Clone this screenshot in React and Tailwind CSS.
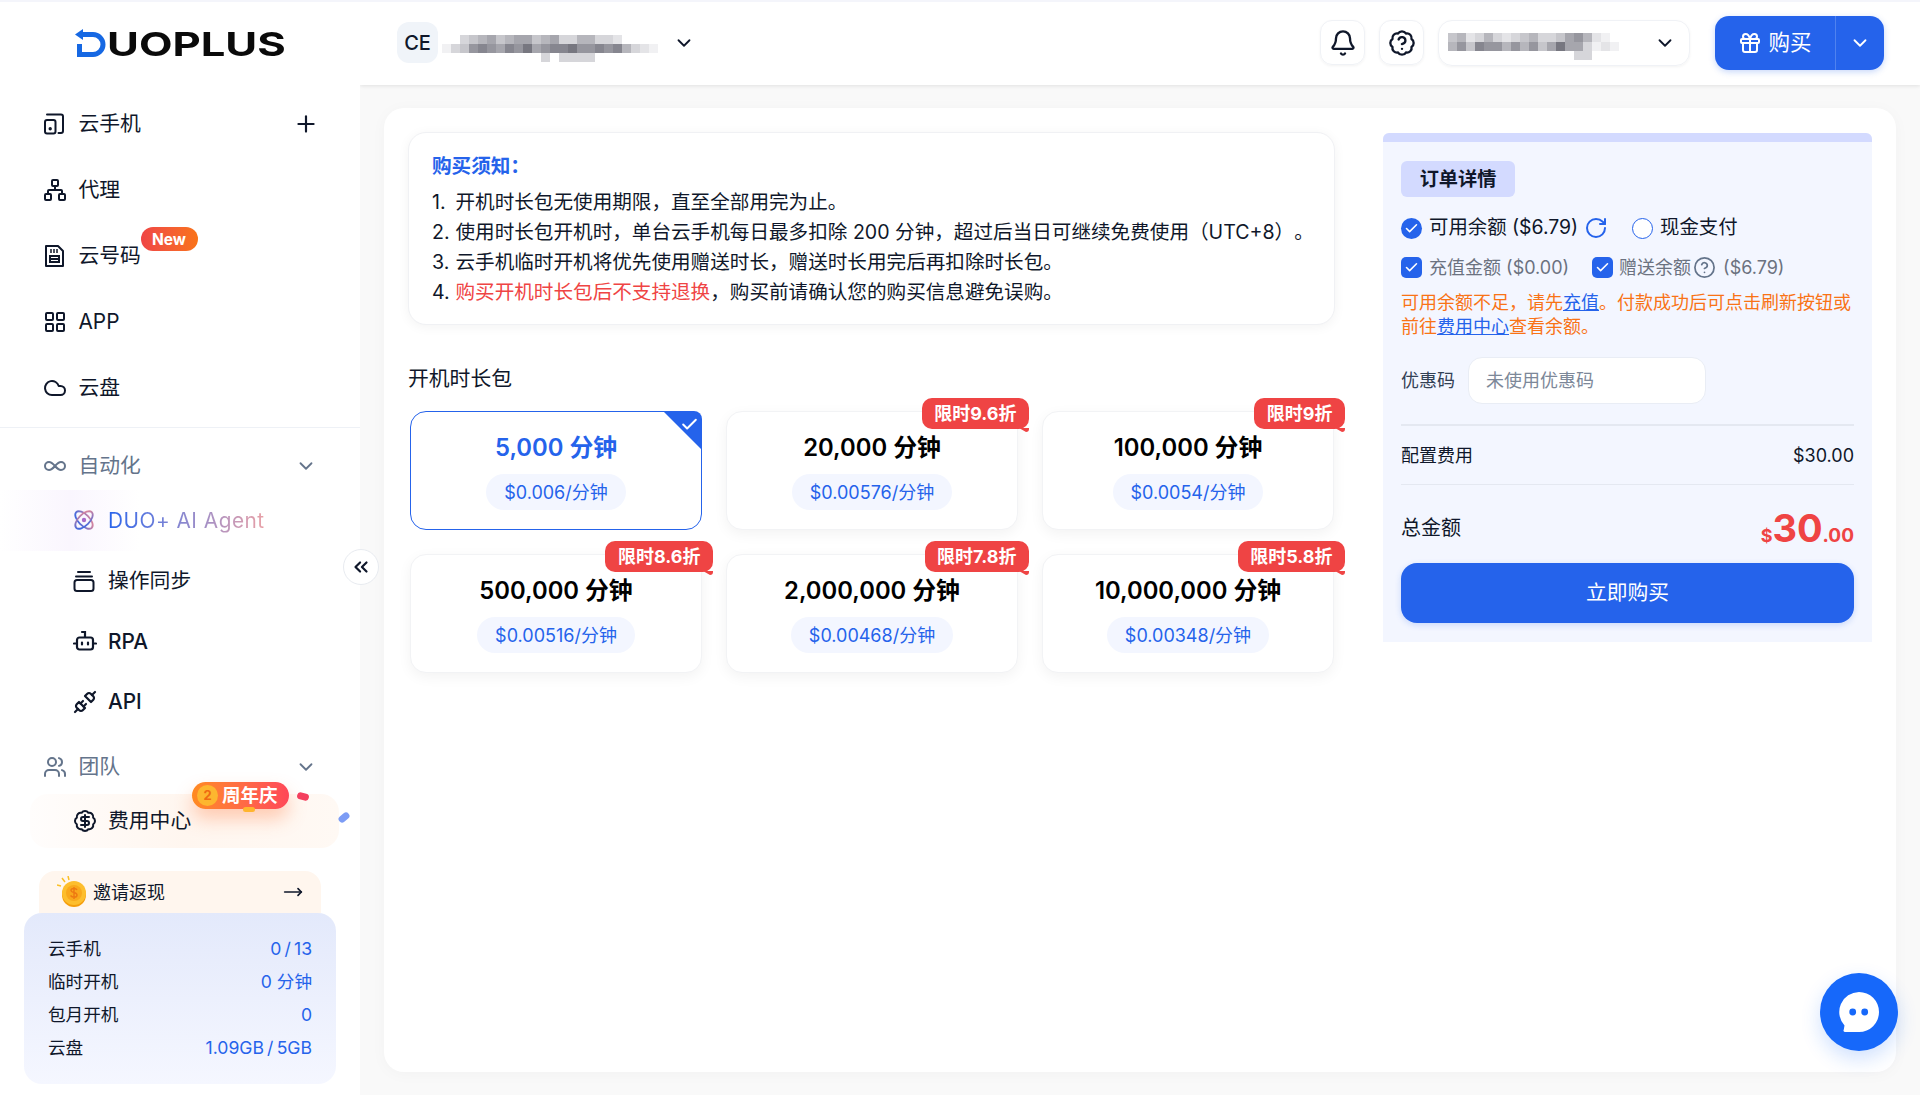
import {
  Plus,
  Network,
  LayoutGrid,
  Cloud,
  Infinity as InfinityIcon,
  ChevronDown,
  ChevronsLeft,
  Users,
  BadgeDollarSign,
  MoveRight,
  Bell,
  BadgeHelp,
  Gift,
  Check,
  RotateCw,
  CircleHelp,
  Unplug,
} from "lucide-react";

const grays = ["none", "#f1f1f3", "#e4e4e7", "#d6d6da", "#c6c6cb", "#b6b6bc", "#a6a6ad", "#96969e", "#86868f", "#777780"];

// mosaic that hides the account names
function Mosaic({ rows, className }) {
  const w = Math.max(...rows.map((r) => r.length)) * 9;
  return (
    <svg width={w} height={rows.length * 9} className={className}>
      {rows.map((row, y) =>
        row.split("").map((c, x) => <rect key={x + "-" + y} x={x * 9} y={y * 9} width="9" height="9" fill={grays[+c]} />)
      )}
    </svg>
  );
}

function PhoneIcon() {
  return (
    <svg width="22" height="22" viewBox="0 0 22 22" fill="none" stroke="#0f172a" strokeWidth="2" strokeLinecap="round">
      <path d="M4 1.500H18a2 2 0 0 1 2 2V18a2 2 0 0 1-2 2h-2.500" />
      <rect x="2" y="7" width="10.500" height="13.500" rx="2" />
      <circle cx="7.200" cy="15.800" r="0.700" fill="#0f172a" />
    </svg>
  );
}

function SimIcon() {
  return (
    <svg width="22" height="24" viewBox="0 0 22 24" fill="none" stroke="#0f172a" strokeWidth="2">
      <path d="M3 2h12l5 5v15H3z" strokeLinejoin="round" />
      <path d="M7 12h9v6H7z" />
      <path d="M7 15h9" />
      <path d="M8 5v4M11 5v4M14 5v4" strokeWidth="1.500" />
    </svg>
  );
}

function AtomIcon() {
  return (
    <svg width="22" height="22" viewBox="0 0 22 22" fill="none" strokeWidth="1.800">
      <defs>
        <linearGradient id="atom" x1="0" y1="1" x2="1" y2="0">
          <stop offset="0" stopColor="#2563eb" />
          <stop offset="1" stopColor="#ef8a94" />
        </linearGradient>
      </defs>
      <ellipse cx="11" cy="11" rx="11" ry="5.600" transform="rotate(45 11 11)" stroke="url(#atom)" />
      <ellipse cx="11" cy="11" rx="11" ry="5.600" transform="rotate(-45 11 11)" stroke="url(#atom)" />
      <circle cx="11" cy="11" r="2.200" fill="#a86bc9" />
    </svg>
  );
}

function StackIcon() {
  return (
    <svg width="22" height="22" viewBox="0 0 22 22" fill="none" stroke="#0f172a" strokeWidth="2" strokeLinecap="round">
      <path d="M5 2h12" />
      <path d="M3 6.500h16" />
      <rect x="1.500" y="10" width="19" height="11" rx="2.500" />
    </svg>
  );
}

function RobotIcon() {
  return (
    <svg width="24" height="24" viewBox="0 0 24 24" fill="none" stroke="#0f172a" strokeWidth="2.200" strokeLinecap="round">
      <path d="M9 3h3v5" />
      <rect x="4" y="8.500" width="16" height="12" rx="2.500" />
      <path d="M1 14.500h2M21 14.500h2" />
      <path d="M9 13.500v2M15 13.500v2" />
    </svg>
  );
}

function CoinIcon() {
  return (
    <svg width="30" height="32" viewBox="0 0 30 32">
      <circle cx="17" cy="19" r="12" fill="#f59e0b" />
      <circle cx="17" cy="17" r="12" fill="#fdbe2d" />
      <circle cx="17" cy="17" r="8" fill="#f9a81c" />
      <path d="M20 14c-1-2-6-2-6 .5s6 1.500 6 4.500-5 2.500-6.500 .5M17 11v12" stroke="#ee7a12" strokeWidth="1.500" fill="none" />
      <path d="M8 6L5 2M4 10L0 9M12 4l-1-4" stroke="#fbbf24" strokeWidth="1.500" />
    </svg>
  );
}

function Logo() {
  return (
    <div className="flex h-[30px] items-center">
      <svg width="32" height="30" viewBox="0 0 32 30" className="shrink-0">
        <path d="M6 6.500H18a10 10 0 0 1 10 10v0a10 10 0 0 1-10 10H4.500V16" fill="none" stroke="#1668e3" strokeWidth="5" />
        <path d="M0 6.500L8 1v11z" fill="#1668e3" />
      </svg>
      <span className="mt-[3px] origin-left scale-x-[1.32] text-[33px] font-bold leading-none text-[#0a0a0a]">UOPLUS</span>
    </div>
  );
}

function NavItem({ icon, label, extra }) {
  return (
    <div className="relative flex h-[66px] items-center pl-[43px] pr-[43px] text-[20.800px] text-[#0f172a]">
      <span className="flex w-[35.500px] shrink-0">{icon}</span>
      <span className="relative">{label}</span>
      {extra}
    </div>
  );
}

function SubItem({ icon, children }) {
  return (
    <div className="flex h-[60.500px] items-center pl-[73px] text-[20.800px] text-[#0f172a]">
      <span className="flex w-[35px] shrink-0">{icon}</span>
      {children}
    </div>
  );
}

function GroupLabel({ icon, label }) {
  return (
    <div className="flex h-[48px] items-center justify-between pl-[43px] pr-[43px] text-[20.800px] text-[#64748b]">
      <div className="flex items-center">
        <span className="flex w-[35.500px] shrink-0">{icon}</span>
        {label}
      </div>
      <ChevronDown size={22} strokeWidth={2} />
    </div>
  );
}

function Sidebar() {
  return (
    <aside className="relative z-20 flex w-[360px] shrink-0 flex-col bg-white">
      <div className="flex h-[91px] items-start pl-[75px] pt-[28px]">
        <Logo />
      </div>
      <NavItem
        icon={<PhoneIcon />}
        label="云手机"
        extra={<Plus size={26} strokeWidth={2} className="absolute right-[41px] text-[#0f172a]" />}
      />
      <NavItem icon={<Network size={24} strokeWidth={2} />} label="代理" />
      <NavItem
        icon={<SimIcon />}
        label={
          <>
            云号码
            <span className="absolute left-[62px] top-[-13px] flex h-[24px] w-[57px] items-center justify-center rounded-full bg-gradient-to-r from-[#ef4444] to-[#f97316] text-[15.500px] font-bold text-white">
              New
            </span>
          </>
        }
      />
      <NavItem icon={<LayoutGrid size={24} strokeWidth={2} />} label="APP" />
      <NavItem icon={<Cloud size={24} strokeWidth={2} />} label="云盘" />
      <div className="mt-[6px] h-px bg-[#eef1f6]" />

      <div className="mt-[14px]">
        <GroupLabel icon={<InfinityIcon size={24} strokeWidth={2} />} label="自动化" />
      </div>
      <div className="bg-gradient-to-r from-white via-[#faf6fe] to-white bg-[length:140px_100%] bg-no-repeat">
        <SubItem icon={<AtomIcon />}>
          <span className="bg-gradient-to-r from-[#2563eb] to-[#e9a0a6] bg-clip-text tracking-[0.500px] text-transparent">
            DUO+ AI Agent
          </span>
        </SubItem>
      </div>
      <SubItem icon={<StackIcon />}>操作同步</SubItem>
      <SubItem icon={<RobotIcon />}>
        <span className="font-medium">RPA</span>
      </SubItem>
      <SubItem icon={<Unplug size={24} strokeWidth={2.200} />}>
        <span className="font-medium">API</span>
      </SubItem>

      <div className="mt-[11px]">
        <GroupLabel icon={<Users size={24} strokeWidth={2} />} label="团队" />
      </div>
      <div className="relative ml-[30px] mr-[21px] mt-[3px] flex h-[54px] items-center rounded-[18px] bg-gradient-to-r from-[#fffdfc] via-[#fff6ef] to-[#fff9f4] pl-[43px] text-[20.800px] text-[#0f172a]">
        <span className="flex w-[35px] shrink-0">
          <BadgeDollarSign size={24} strokeWidth={2} />
        </span>
        费用中心
        <span className="absolute left-[162px] top-[-12px] flex h-[27px] w-[97px] items-center rounded-full bg-gradient-to-r from-[#ff8a1f] to-[#ff4757] pl-[5px] text-[18.500px] font-bold text-white shadow-[0_10px_18px_rgba(255,120,60,0.35)]">
          <span className="mr-[4px] flex h-[21px] w-[21px] items-center justify-center rounded-full bg-[#fdb62f] text-[13px] font-bold text-[#ee6a12]">
            2
          </span>
          周年庆
          <span className="absolute bottom-[-3px] left-[51px] h-[5px] w-[12px] rounded-full bg-[#ffb52e]" />
        </span>
        <span className="absolute left-[267px] top-[-1px] h-[7px] w-[12px] rotate-[15deg] rounded-full bg-[#f43f5e]" />
        <span className="absolute right-[-11px] top-[20px] h-[7px] w-[12px] rotate-[-40deg] rounded-full bg-[#7c9cf5]" />
      </div>

      <div className="mx-[39px] mt-[23px] flex h-[42px] items-center justify-between rounded-t-[16px] bg-[#fff6ee] pl-[18px] pr-[18px] text-[18px] text-[#0f172a]">
        <div className="flex items-center gap-[6px]">
          <CoinIcon />
          邀请返现
        </div>
        <MoveRight size={20} strokeWidth={2} />
      </div>
      <div className="mx-[24px] h-[171px] rounded-[18px] bg-gradient-to-b from-[#e3e9fb] to-[#f5f7ff] px-[24px] pt-[20px] text-[17.600px] text-[#0f172a]">
        {[
          ["云手机", "0\u2009/\u200913"],
          ["临时开机", "0 分钟"],
          ["包月开机", "0"],
          ["云盘", "1.09GB\u2009/\u20095GB"],
        ].map(([k, v]) => (
          <div key={k} className="flex h-[33px] items-center justify-between">
            <span>{k}</span>
            <span className="text-[#2563eb]">{v}</span>
          </div>
        ))}
      </div>

      <button className="absolute left-[343px] top-[549px] flex h-[36px] w-[36px] items-center justify-center rounded-full border border-[#e8ebf0] bg-white text-[#0f172a]">
        <ChevronsLeft size={22} strokeWidth={2.400} />
      </button>
    </aside>
  );
}

function Header() {
  return (
    <header className="relative z-10 flex h-[85px] shrink-0 items-center bg-white pl-[37px] pr-[36px] shadow-[0_1px_4px_rgba(0,0,0,0.1)]">
      <span className="flex h-[41px] w-[41px] items-center justify-center rounded-[12px] bg-[#f0f4f9] text-[20px] font-medium text-[#0f172a]">
        CE
      </span>
      <Mosaic
        className="ml-[4px] mt-[12px]"
        rows={["003456456645633553320000", "134787687967889778785321", "000000000003033330000000"]}
      />
      <ChevronDown size={22} strokeWidth={2} className="ml-[15px] text-[#0f172a]" />
      <div className="flex-1" />
      <span className="flex h-[45px] w-[45px] items-center justify-center rounded-[12px] border border-[#f0f2f6] shadow-[0_1px_3px_rgba(0,0,0,0.05)]">
        <Bell size={28} strokeWidth={2} className="text-[#0f172a]" />
      </span>
      <span className="ml-[14px] flex h-[45px] w-[45px] items-center justify-center rounded-[12px] border border-[#f0f2f6] shadow-[0_1px_3px_rgba(0,0,0,0.05)]">
        <BadgeHelp size={28} strokeWidth={2} className="text-[#0f172a]" />
      </span>
      <div className="ml-[14px] flex h-[46px] w-[252px] items-center rounded-[14px] border border-[#f0f2f6] pl-[9px] pr-[13px] shadow-[0_1px_3px_rgba(0,0,0,0.05)]">
        <Mosaic className="mt-[7px]" rows={["4523532345334675210", "57487757574696631210", "00000000000000330"]} />
        <div className="flex-1" />
        <ChevronDown size={22} strokeWidth={2} className="text-[#0f172a]" />
      </div>
      <div className="ml-[25px] flex h-[54px] w-[169px] items-center rounded-[14px] bg-[#2563eb] text-white shadow-[0_2px_6px_rgba(37,99,235,0.25)]">
        <div className="flex h-full w-[121px] items-center justify-center gap-[6px] border-r border-[#4f82ef] text-[21.500px]">
          <Gift size={24} strokeWidth={2} />
          购买
        </div>
        <div className="flex flex-1 items-center justify-center">
          <ChevronDown size={22} strokeWidth={2} />
        </div>
      </div>
    </header>
  );
}

const packs = [
  { name: "5,000 分钟", price: "$0.006/分钟", selected: true },
  { name: "20,000 分钟", price: "$0.00576/分钟", tag: "限时9.6折" },
  { name: "100,000 分钟", price: "$0.0054/分钟", tag: "限时9折" },
  { name: "500,000 分钟", price: "$0.00516/分钟", tag: "限时8.6折" },
  { name: "2,000,000 分钟", price: "$0.00468/分钟", tag: "限时7.8折" },
  { name: "10,000,000 分钟", price: "$0.00348/分钟", tag: "限时5.8折" },
];

function PackCard({ pack }) {
  return (
    <div
      className={
        "relative flex h-[119px] flex-col items-center rounded-[16px] border bg-white pt-[20px] " +
        (pack.selected ? "border-[#2563eb]" : "border-[#f2f3f5] shadow-[0_4px_14px_rgba(0,0,0,0.05)]")
      }
    >
      <div className={"flex h-[32px] items-center text-[23.800px] font-semibold " + (pack.selected ? "text-[#2563eb]" : "text-black")}>
        {pack.name}
      </div>
      <div className="mt-[10px] flex h-[36px] items-center rounded-full bg-[#f3f6ff] px-[18px] text-[18px] text-[#2563eb]">
        {pack.price}
      </div>
      {pack.selected && (
        <>
          <svg width="39" height="39" viewBox="0 0 39 39" className="absolute right-[-1px] top-[-1px]">
            <path d="M0 0h31a8 8 0 0 1 8 8v31z" fill="#2563eb" />
          </svg>
          <Check size={19} strokeWidth={2.500} className="absolute right-[2px] top-[3px] text-white" />
        </>
      )}
      {pack.tag && (
        <div className="absolute right-[-12px] top-[-14px]">
          <div className="flex h-[31px] items-center rounded-[10px] bg-[#ef4444] px-[12.500px] text-[18px] font-bold text-white">
            {pack.tag}
          </div>
          <svg width="10" height="4" viewBox="0 0 10 4" className="absolute right-0 top-[30px]">
            <path d="M0 0h10v1a3 3 0 0 1-3 3z" fill="#ef4444" />
          </svg>
        </div>
      )}
    </div>
  );
}

function NoticeLine({ no, children }) {
  return (
    <div className="whitespace-nowrap">
      <span className="inline-block w-[23.500px]">{no}.</span>
      {children}
    </div>
  );
}

function Notice() {
  return (
    <div className="rounded-[18px] border border-[#f0f1f4] bg-white px-[23px] pb-[17px] pt-[18px] text-[19.600px] leading-[30px] text-[#0f172a] shadow-[0_2px_12px_rgba(0,0,0,0.05)] [text-spacing-trim:space-all]">
      <div className="mb-[6px] font-bold text-[#2563eb]">购买须知：</div>
      <NoticeLine no="1">开机时长包无使用期限，直至全部用完为止。</NoticeLine>
      <NoticeLine no="2">使用时长包开机时，单台云手机每日最多扣除 200 分钟，超过后当日可继续免费使用（UTC+8）。</NoticeLine>
      <NoticeLine no="3">云手机临时开机将优先使用赠送时长，赠送时长用完后再扣除时长包。</NoticeLine>
      <NoticeLine no="4">
        <span className="text-[#ef4444]">购买开机时长包后不支持退换</span>，购买前请确认您的购买信息避免误购。
      </NoticeLine>
    </div>
  );
}

function BlueCheck({ round }) {
  return (
    <span className={"flex h-[21px] w-[21px] shrink-0 items-center justify-center bg-[#2563eb] text-white " + (round ? "rounded-full" : "rounded-[5px]")}>
      <Check size={15} strokeWidth={2.500} />
    </span>
  );
}

function OrderPanel() {
  return (
    <div className="mt-[1px] h-[509px] w-[489px] shrink-0 overflow-hidden rounded-t-[6px] bg-[#f3f6ff]">
      <div className="h-[9px] bg-[#d3daff]" />
      <div className="px-[18px] pt-[19px]">
        <div className="flex h-[36px] w-[114px] items-center justify-center rounded-[6px] bg-[#d3daff] text-[19.200px] font-bold text-[#0f172a]">
          订单详情
        </div>
        <div className="mt-[17px] flex h-[28px] items-center text-[19.400px] text-[#0f172a]">
          <BlueCheck round />
          <span className="ml-[7px]">可用余额 ($6.79)</span>
          <RotateCw size={24} strokeWidth={2} className="ml-[6px] text-[#2563eb]" />
          <span className="ml-[24px] h-[21px] w-[21px] rounded-full border border-[#2563eb] bg-white" />
          <span className="ml-[7px]">现金支付</span>
        </div>
        <div className="mt-[11px] flex h-[28px] items-center text-[18px] text-[#6b7280]">
          <BlueCheck />
          <span className="ml-[7px]">充值金额 ($0.00)</span>
          <span className="ml-[23px]"><BlueCheck /></span>
          <span className="ml-[6px]">赠送余额</span>
          <CircleHelp size={23} strokeWidth={1.800} className="ml-[2px] text-[#64748b]" />
          <span className="ml-[7px]">($6.79)</span>
        </div>
        <div className="mt-[10px] text-[18px] leading-[24px] text-[#f97316]">
          可用余额不足，请先<span className="text-[#2563eb] underline">充值</span>。付款成功后可点击刷新按钮或
          <br />
          前往<span className="text-[#2563eb] underline">费用中心</span>查看余额。
        </div>
        <div className="mt-[18px] flex items-center">
          <span className="w-[67px] text-[18px] text-[#334155]">优惠码</span>
          <div className="flex h-[47px] w-[238px] items-center rounded-[14px] border border-[#e9edf5] bg-white pl-[17px] text-[18px] text-[#7d8899]">
            未使用优惠码
          </div>
        </div>
        <div className="mt-[20px] h-[2px] bg-[#e4e8f1]" />
        <div className="flex h-[58px] items-center justify-between text-[18px] text-[#0f172a]">
          <span>配置费用</span>
          <span>$30.00</span>
        </div>
        <div className="h-px bg-[#e4e8f1]" />
        <div className="flex h-[78px] items-center justify-between pt-[8px]">
          <span className="text-[20px] text-[#0f172a]">总金额</span>
          <span className="font-bold text-[#ef4444]">
            <span className="text-[18px]">$</span>
            <span className="text-[38px]">30</span>
            <span className="text-[19px]">.00</span>
          </span>
        </div>
        <button className="flex h-[60px] w-full items-center justify-center rounded-[16px] bg-[#2563eb] text-[20.800px] text-white shadow-[0_2px_6px_rgba(37,99,235,0.2)]">
          立即购买
        </button>
      </div>
    </div>
  );
}

export default function App() {
  return (
    <div className="flex h-[1095px] w-full overflow-hidden bg-[#f9f9f9] font-[Inter,'Noto_Sans_CJK_SC',sans-serif]">
      <div className="absolute left-0 top-0 z-40 h-[2px] w-full bg-[#f4f5fb]" />
      <Sidebar />
      <main className="flex min-w-0 flex-1 flex-col">
        <Header />
        <div className="mx-[24px] mt-[23px] flex h-[964px] items-start rounded-[20px] bg-white p-[24px] shadow-[0_2px_16px_rgba(0,0,0,0.03)]">
          <div className="w-[927px] shrink-0">
            <Notice />
            <div className="mt-[39px] flex h-[30px] items-center text-[20.800px] text-[#0f172a]">开机时长包</div>
            <div className="ml-[2px] mt-[17px] grid w-[924px] grid-cols-3 gap-[24px]">
              {packs.map((p) => (
                <PackCard key={p.name} pack={p} />
              ))}
            </div>
          </div>
          <div className="ml-[48px]">
            <OrderPanel />
          </div>
        </div>
      </main>
      <button className="absolute left-[1820px] top-[973px] z-30 flex h-[78px] w-[78px] items-center justify-center rounded-full bg-[#1668fa] shadow-[0_8px_20px_rgba(22,104,250,0.2)]">
        <svg width="40" height="40" viewBox="0 0 40 40">
          <path d="M20 0a20 20 0 0 1 0 40H6a1.500 1.500 0 0 1-1.200-2.400L5.500 33.500A20 20 0 0 1 20 0z" fill="#fff" />
          <circle cx="13.700" cy="20" r="3.400" fill="#1668fa" />
          <circle cx="25.700" cy="20" r="3.400" fill="#1668fa" />
        </svg>
      </button>
    </div>
  );
}
